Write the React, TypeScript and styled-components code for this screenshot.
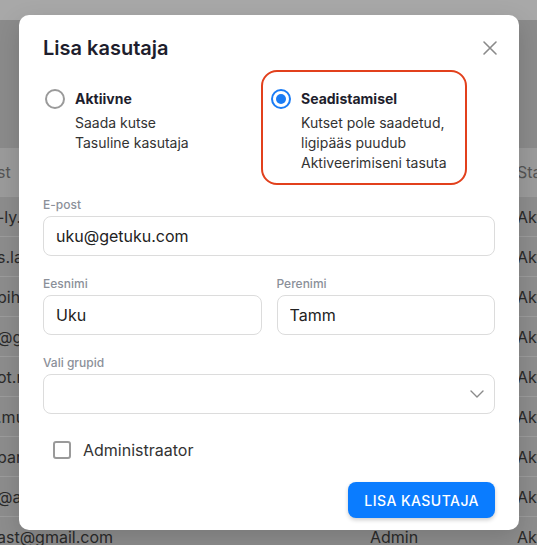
import styled, { createGlobalStyle } from "styled-components";

const GlobalStyle = createGlobalStyle`
  * {
    box-sizing: border-box;
  }

  body {
    margin: 0;
    background: #8b8b8b;
    font-family: Inter, "Noto Sans", sans-serif;
  }
`;

const Page = styled.div`
  position: relative;
  width: 537px;
  height: 545px;
  overflow: hidden;
  background: #8b8b8b;
`;

const TopBand = styled.div`
  height: 20px;
  background: #a8a8a8;
`;

const PageHead = styled.div`
  height: 128px;
  background: #8b8b8b;
`;

const TableRow = styled.div<{ $head?: boolean }>`
  display: grid;
  grid-template-columns: 373px 147px 1fr;
  align-items: center;
  height: ${props => (props.$head ? "49px" : "40px")};
  border-bottom: 1px solid #9c9c9c;
  background: ${props => (props.$head ? "#9b9b9b" : "#8d8d8d")};
  font-size: 16px;
  color: ${props => (props.$head ? "#555" : "#2a2a2a")};
  white-space: nowrap;
  overflow: hidden;
`;

const Cell = styled.div`
  overflow: hidden;
  margin-left: -3px;
`;

const Overlay = styled.div`
  position: absolute;
  inset: 0;
  padding: 15px 0 0 19px;
`;

const Dialog = styled.div`
  width: 500px;
  padding: 19px 24px 12px;
  background: #fff;
  border-radius: 10px;
  box-shadow: 0 8px 24px rgba(0, 0, 0, .15);
`;

const DialogHeader = styled.div`
  display: flex;
  justify-content: space-between;
  align-items: center;
`;

const Title = styled.h2`
  margin: 0;
  font-size: 20px;
  line-height: 28px;
  font-weight: 600;
  color: #1e1e2d;
`;

const CloseButton = styled.button`
  display: flex;
  margin: 0 -3px 0 0;
  padding: 0;
  border: 0;
  background: none;
`;

const Options = styled.div`
  display: grid;
  grid-template-columns: 226px 206px;
  margin: 8px 0 0 -8px;
`;

const Option = styled.div<{ $active?: boolean }>`
  display: flex;
  gap: 10px;
  padding: 16px 12px 10px 8px;
  border: 2px solid ${props => (props.$active ? "#e2401c" : "transparent")};
  border-radius: 16px;
`;

const Radio = styled.span<{ $checked?: boolean }>`
  display: flex;
  justify-content: center;
  align-items: center;
  flex-shrink: 0;
  width: 20px;
  height: 20px;
  margin-top: 1px;
  border: 2px solid ${props => (props.$checked ? "#1a7cf5" : "#9a9a9a")};
  border-radius: 50%;

  &::after {
    content: "";
    display: ${props => (props.$checked ? "block" : "none")};
    width: 10px;
    height: 10px;
    border-radius: 50%;
    background: #1a7cf5;
  }
`;

const OptionLabel = styled.div`
  font-size: 14px;
  line-height: 22px;
  font-weight: 700;
  color: #1e1e2d;
`;

const OptionText = styled.div`
  margin-top: 3px;
  font-size: 14px;
  line-height: 20px;
  color: #333;
`;

const Field = styled.div<{ $gap?: number }>`
  margin-top: ${props => props.$gap ?? 20}px;
`;

const FieldRow = styled.div`
  display: grid;
  grid-template-columns: 1fr 1fr;
  gap: 15px;
`;

const Label = styled.label`
  display: block;
  margin-bottom: 3px;
  font-size: 12px;
  line-height: 16px;
  font-weight: 500;
  color: #8b9099;
`;

const Input = styled.input`
  display: block;
  width: 100%;
  height: 40px;
  padding: 0 12px;
  border: 1px solid #dcdcdc;
  border-radius: 8px;
  font-family: inherit;
  font-size: 16px;
  color: #222;
  outline: none;
`;

const Select = styled.div`
  display: flex;
  justify-content: flex-end;
  align-items: center;
  height: 40px;
  padding: 0 10px;
  border: 1px solid #dcdcdc;
  border-radius: 8px;
`;

const CheckRow = styled.label`
  display: flex;
  align-items: center;
  gap: 12px;
  margin-top: 24px;
  padding-left: 10px;
  font-size: 16px;
  line-height: 24px;
  color: #333;
`;

const Checkbox = styled.span`
  width: 18px;
  height: 18px;
  border: 2px solid #9a9a9a;
  border-radius: 3px;
`;

const Footer = styled.div`
  display: flex;
  justify-content: flex-end;
  margin-top: 20px;
`;

const SubmitButton = styled.button`
  height: 36px;
  padding: 0 16px;
  border: 0;
  border-radius: 8px;
  background: #0a7cff;
  box-shadow: 0 2px 4px rgba(0, 0, 0, .2);
  font-family: inherit;
  font-size: 14px;
  font-weight: 500;
  letter-spacing: .45px;
  color: #fff;
`;

const rows = [
  ["-ly.", ""],
  ["s.la", ""],
  ["pihe", ""],
  ["@g", ""],
  ["ot.r", ""],
  [".mu", ""],
  ["part", ""],
  ["@ar", ""],
  ["ast@gmail.com", "Admin"],
];

function App() {
  return (
    <>
      <GlobalStyle />
      <Page>
        <TopBand />
        <PageHead />
        <TableRow $head>
          <Cell>st</Cell>
          <Cell />
          <Cell>Staatus</Cell>
        </TableRow>
        {rows.map(([email, role], i) => (
          <TableRow key={i}>
            <Cell>{email}</Cell>
            <Cell>{role}</Cell>
            <Cell>Aktiivne</Cell>
          </TableRow>
        ))}

        <Overlay>
          <Dialog>
            <DialogHeader>
              <Title>Lisa kasutaja</Title>
              <CloseButton aria-label="Sulge">
                <svg width="16" height="16" viewBox="0 0 16 16">
                  <path d="M2 2 L14 14 M14 2 L2 14" stroke="#8a8a8a" strokeWidth="1.6" strokeLinecap="round" />
                </svg>
              </CloseButton>
            </DialogHeader>

            <Options>
              <Option>
                <Radio />
                <div>
                  <OptionLabel>Aktiivne</OptionLabel>
                  <OptionText>
                    Saada kutse<br />Tasuline kasutaja
                  </OptionText>
                </div>
              </Option>
              <Option $active>
                <Radio $checked />
                <div>
                  <OptionLabel>Seadistamisel</OptionLabel>
                  <OptionText>
                    Kutset pole saadetud,<br />ligipääs puudub<br />Aktiveerimiseni tasuta
                  </OptionText>
                </div>
              </Option>
            </Options>

            <Field $gap={12}>
              <Label>E-post</Label>
              <Input defaultValue="uku@getuku.com" />
            </Field>

            <Field>
              <FieldRow>
                <div>
                  <Label>Eesnimi</Label>
                  <Input defaultValue="Uku" />
                </div>
                <div>
                  <Label>Perenimi</Label>
                  <Input defaultValue="Tamm" />
                </div>
              </FieldRow>
            </Field>

            <Field>
              <Label>Vali grupid</Label>
              <Select>
                <svg width="14" height="8" viewBox="0 0 14 8">
                  <path d="M1 1 L7 7 L13 1" fill="none" stroke="#8a8a8a" strokeWidth="1.4" strokeLinecap="round" strokeLinejoin="round" />
                </svg>
              </Select>
            </Field>

            <CheckRow>
              <Checkbox />
              Administraator
            </CheckRow>

            <Footer>
              <SubmitButton>LISA KASUTAJA</SubmitButton>
            </Footer>
          </Dialog>
        </Overlay>
      </Page>
    </>
  );
}

export default App;
